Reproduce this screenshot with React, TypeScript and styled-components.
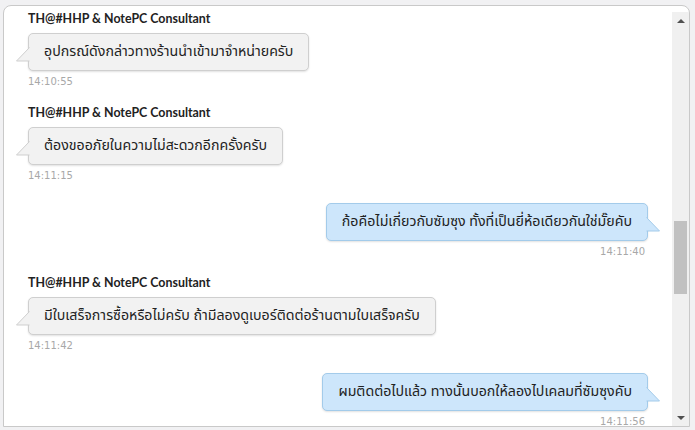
import styled, { createGlobalStyle } from "styled-components";

const GlobalStyle = createGlobalStyle`
  html, body {
    margin: 0;
    padding: 0;
    background: #f1f1f3;
  }
  body {
    font-family: "Open Sans", "Noto Sans Thai", Tahoma, sans-serif;
  }
`;

type Msg = {
  mine?: boolean;
  name?: string;
  text: string;
  time: string;
};

const messages: Msg[] = [
  {
    name: "TH@#HHP & NotePC Consultant",
    text: "อุปกรณ์ดังกล่าวทางร้านนำเข้ามาจำหน่ายครับ",
    time: "14:10:55",
  },
  {
    name: "TH@#HHP & NotePC Consultant",
    text: "ต้องขออภัยในความไม่สะดวกอีกครั้งครับ",
    time: "14:11:15",
  },
  {
    mine: true,
    text: "ก้อคือไม่เกี่ยวกับซัมซุง ทั้งที่เป็นยี่ห้อเดียวกันใช่มั๊ยคับ",
    time: "14:11:40",
  },
  {
    name: "TH@#HHP & NotePC Consultant",
    text: "มีใบเสร็จการซื้อหรือไม่ครับ ถ้ามีลองดูเบอร์ติดต่อร้านตามใบเสร็จครับ",
    time: "14:11:42",
  },
  {
    mine: true,
    text: "ผมติดต่อไปแล้ว ทางนั้นบอกให้ลองไปเคลมที่ซัมซุงคับ",
    time: "14:11:56",
  },
];

const Tail = ({ mine }: { mine?: boolean }) => (
  <TailSvg $mine={mine} width="14" height="15" viewBox="0 0 14 15">
    {mine ? (
      <path
        d="M0.5 0.5 L13.5 14 L0.5 14"
        fill="#cde6fb"
        stroke="#a3cbea"
        strokeWidth="1"
      />
    ) : (
      <path
        d="M13.5 0.5 L0.5 14 L13.5 14"
        fill="#f2f2f2"
        stroke="#cfcfcf"
        strokeWidth="1"
      />
    )}
  </TailSvg>
);

const App = () => {
  return (
    <>
      <GlobalStyle />
      <Page>
        <Panel>
          <Messages>
            {messages.map((m, i) => (
              <Group key={i} $mine={m.mine} $first={i === 0}>
                {m.name && <Name>{m.name}</Name>}
                <Bubble $mine={m.mine}>
                  {m.text}
                  <Tail mine={m.mine} />
                </Bubble>
                <Time>{m.time}</Time>
              </Group>
            ))}
          </Messages>
          <ScrollBar>
            <Arrow $up />
            <Track>
              <Thumb />
            </Track>
            <Arrow />
          </ScrollBar>
        </Panel>
      </Page>
    </>
  );
};

export default App;

const Page = styled.div`
  width: 695px;
  height: 430px;
  padding: 5px 5px 0 3px;
  box-sizing: border-box;
  overflow: hidden;
`;

const Panel = styled.div`
  height: 422px;
  box-sizing: border-box;
  background: #ffffff;
  border: 1px solid #c9c9c9;
  border-radius: 8px 8px 0 0;
  display: flex;
  padding-top: 5px;
  overflow: hidden;
`;

const Messages = styled.div`
  flex: 1;
  display: flex;
  flex-direction: column;
  padding: 0 24px 0 24px;
  overflow: hidden;
`;

const Group = styled.div<{ $mine?: boolean; $first?: boolean }>`
  display: flex;
  flex-direction: column;
  align-items: ${(p) => (p.$mine ? "flex-end" : "flex-start")};
  margin-top: ${(p) => (p.$first ? "0" : p.$mine ? "22px" : "18px")};
`;

const Name = styled.div`
  font-family: Lato, "Open Sans", sans-serif;
  font-weight: 700;
  font-size: 12.4px;
  line-height: 16px;
  color: #222222;
  margin-bottom: 6px;
`;

const Bubble = styled.div<{ $mine?: boolean }>`
  position: relative;
  font-family: Tahoma, "Noto Sans Thai", "DejaVu Sans", sans-serif;
  font-size: 14.2px;
  line-height: 22px;
  color: #222222;
  padding: 7px 15px;
  background: ${(p) => (p.$mine ? "#cde6fb" : "#f2f2f2")};
  border: 1px solid ${(p) => (p.$mine ? "#a3cbea" : "#cfcfcf")};
  border-radius: 5px;
  box-shadow: 0 1px 2px rgba(0, 0, 0, 0.12);
  white-space: nowrap;
`;

const TailSvg = styled.svg<{ $mine?: boolean }>`
  position: absolute;
  top: 13px;
  ${(p) => (p.$mine ? "right: -13px;" : "left: -13px;")}
  overflow: visible;
`;

const Time = styled.div`
  font-family: Tahoma, "DejaVu Sans", sans-serif;
  font-size: 10px;
  line-height: 11px;
  color: #a8a8a8;
  margin-top: 5px;
  padding: 0 3px 0 0;
`;

const ScrollBar = styled.div`
  width: 17px;
  margin-top: 1px;
  background: #f0f0f0;
  display: flex;
  flex-direction: column;
`;

const Track = styled.div`
  flex: 1;
  display: flex;
  flex-direction: column;
  padding-top: 192px;
`;

const Thumb = styled.div`
  height: 73px;
  margin: 0 2px;
  background: #c1c1c1;
`;

const Arrow = styled.div<{ $up?: boolean }>`
  height: 17px;
  display: flex;
  align-items: center;
  justify-content: center;
  &::after {
    content: "";
    width: 0;
    height: 0;
    border-left: 4px solid transparent;
    border-right: 4px solid transparent;
    ${(p) =>
      p.$up
        ? "border-bottom: 4px solid #505050;"
        : "border-top: 4px solid #505050;"}
  }
`;
